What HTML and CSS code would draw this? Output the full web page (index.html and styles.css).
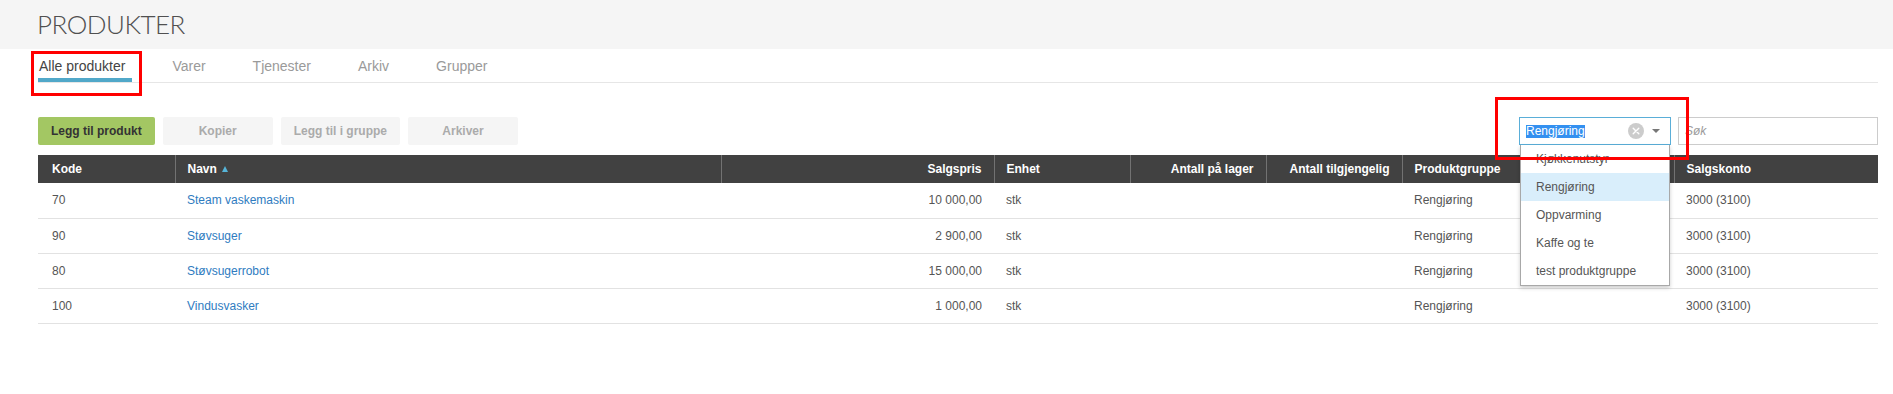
FILE: index.html
```html
<!DOCTYPE html>
<html lang="no">
<head>
<meta charset="utf-8">
<title>Produkter</title>
<link rel="stylesheet" href="styles.css">
</head>
<body>
<header class="page-head">
  <h1 class="page-title">PRODUKTER</h1>
</header>
<main class="content">
  <nav class="tabs">
    <a class="tab active">Alle produkter<span class="annot annot-tab"></span></a>
    <a class="tab">Varer</a>
    <a class="tab">Tjenester</a>
    <a class="tab">Arkiv</a>
    <a class="tab">Grupper</a>
  </nav>

  <div class="toolbar">
    <div class="actions">
      <button class="btn btn-primary">Legg til produkt</button>
      <button class="btn btn-disabled">Kopier</button>
      <button class="btn btn-disabled">Legg til i gruppe</button>
      <button class="btn btn-disabled">Arkiver</button>
    </div>
    <div class="filters">
      <div class="combo">
        <span class="combo-value"><span class="combo-sel">Rengjøring</span></span>
        <span class="combo-clear">
          <svg width="16" height="16" viewBox="0 0 16 16"><circle cx="8" cy="8" r="8" fill="#cccccc"/><path d="M5.2 5.2 L10.8 10.8 M10.8 5.2 L5.2 10.8" stroke="#ffffff" stroke-width="1.4" stroke-linecap="round"/></svg>
        </span>
        <span class="combo-caret"></span>
        <ul class="combo-menu">
          <li>Kjøkkenutstyr</li>
          <li class="hover">Rengjøring</li>
          <li>Oppvarming</li>
          <li>Kaffe og te</li>
          <li>test produktgruppe</li>
        </ul>
        <span class="annot annot-combo"></span>
      </div>
      <input class="search" type="text" placeholder="Søk">
    </div>
  </div>

  <table class="grid">
    <colgroup>
      <col class="c-kode"><col class="c-navn"><col class="c-pris"><col class="c-enhet">
      <col class="c-lager"><col class="c-tilg"><col class="c-gruppe"><col class="c-konto">
    </colgroup>
    <thead>
      <tr>
        <th class="first">Kode</th>
        <th>Navn <span class="sort-up"></span></th>
        <th class="num">Salgspris</th>
        <th>Enhet</th>
        <th class="num">Antall på lager</th>
        <th class="num">Antall tilgjengelig</th>
        <th>Produktgruppe</th>
        <th>Salgskonto</th>
      </tr>
    </thead>
    <tbody>
      <tr>
        <td class="first">70</td><td><a class="link">Steam vaskemaskin</a></td><td class="num">10 000,00</td><td>stk</td>
        <td class="num"></td><td class="num"></td><td>Rengjøring</td><td>3000 (3100)</td>
      </tr>
      <tr>
        <td class="first">90</td><td><a class="link">Støvsuger</a></td><td class="num">2 900,00</td><td>stk</td>
        <td class="num"></td><td class="num"></td><td>Rengjøring</td><td>3000 (3100)</td>
      </tr>
      <tr>
        <td class="first">80</td><td><a class="link">Støvsugerrobot</a></td><td class="num">15 000,00</td><td>stk</td>
        <td class="num"></td><td class="num"></td><td>Rengjøring</td><td>3000 (3100)</td>
      </tr>
      <tr>
        <td class="first">100</td><td><a class="link">Vindusvasker</a></td><td class="num">1 000,00</td><td>stk</td>
        <td class="num"></td><td class="num"></td><td>Rengjøring</td><td>3000 (3100)</td>
      </tr>
    </tbody>
  </table>
</main>
</body>
</html>
```

FILE: styles.css
```css
* { box-sizing: border-box; }

html, body {
  margin: 0;
  padding: 0;
  background: #ffffff;
  font-family: "Liberation Sans", Arial, sans-serif;
  font-size: 12px;
  color: #555555;
}

.page-head {
  height: 49px;
  background: #f5f5f5;
  padding-left: 37px;
}

.page-title {
  margin: 0;
  font-family: Lato, "Open Sans", sans-serif;
  font-weight: 300;
  font-size: 26px;
  line-height: 49px;
  color: #505050;
  letter-spacing: -0.5px;
}

.content {
  padding: 0 15px 0 38px;
}

/* Tabs */
.tabs {
  display: flex;
  gap: 39px;
  padding-top: 9px;
  border-bottom: 1px solid #e6e6e6;
}

.tab {
  position: relative;
  display: block;
  font-size: 14px;
  line-height: 16px;
  color: #9a9a9a;
  padding: 0 7px 4px 1px;
  border-bottom: 4px solid transparent;
}

.tab.active {
  color: #444444;
  border-bottom-color: #51a8c9;
}

.annot {
  position: absolute;
  border: 3px solid #ff0000;
  z-index: 20;
  pointer-events: none;
}

.annot-tab {
  left: -7px;
  top: -7px;
  width: 111px;
  height: 45px;
}

/* Toolbar */
.toolbar {
  display: flex;
  align-items: center;
  justify-content: space-between;
  margin-top: 34px;
  height: 28px;
}

.actions {
  display: flex;
  gap: 8px;
}

.btn {
  height: 28px;
  min-width: 110px;
  padding: 0 13px;
  border: 0;
  border-radius: 2px;
  font-family: "Liberation Sans", Arial, sans-serif;
  font-size: 12px;
  font-weight: bold;
}

.btn-primary {
  background: #a3c763;
  color: #333333;
}

.btn-disabled {
  background: #f5f5f5;
  color: #ababab;
}

.filters {
  display: flex;
  gap: 7px;
}

.combo {
  position: relative;
  display: flex;
  align-items: center;
  width: 152px;
  height: 28px;
  border: 1px solid #5aaed8;
  padding: 0 10px 0 6px;
  background: #ffffff;
}

.combo-value {
  flex: 1;
  line-height: 13px;
}

.combo-sel {
  background: #3390f0;
  color: #ffffff;
  font-size: 12px;
  line-height: 13px;
  display: inline-block;
}

.combo-clear {
  display: flex;
  width: 16px;
  height: 16px;
  margin-right: 8px;
}

.combo-caret {
  width: 0;
  height: 0;
  border-left: 4px solid transparent;
  border-right: 4px solid transparent;
  border-top: 4px solid #777777;
}

.combo-menu {
  position: absolute;
  left: 0;
  top: 27px;
  width: 150px;
  margin: 0;
  padding: 0;
  list-style: none;
  background: #ffffff;
  border: 1px solid #a8a8a8;
  border-top: 0;
  box-shadow: 0 2px 4px rgba(0, 0, 0, 0.2);
  z-index: 10;
}

.combo-menu li {
  height: 28px;
  line-height: 28px;
  padding-left: 15px;
  font-size: 12px;
  color: #555555;
}

.combo-menu li.hover {
  background: #d9eefb;
}

.annot-combo {
  left: -25px;
  top: -21px;
  width: 194px;
  height: 63px;
}

.search {
  width: 200px;
  height: 28px;
  border: 1px solid #cccccc;
  padding: 0 6px;
  font-family: "Liberation Sans", Arial, sans-serif;
  font-size: 12px;
  outline: none;
}

.search::placeholder {
  color: #9a9a9a;
  font-style: italic;
}

/* Table */
.grid {
  width: 100%;
  margin-top: 10px;
  border-collapse: collapse;
  table-layout: fixed;
}

.c-kode { width: 137px; }
.c-navn { width: 546px; }
.c-pris { width: 273px; }
.c-enhet { width: 136px; }
.c-lager { width: 136px; }
.c-tilg { width: 136px; }
.c-gruppe { width: 272px; }
.c-konto { width: 204px; }

.grid th {
  height: 28px;
  padding: 0 12px;
  background: #414141;
  color: #ffffff;
  font-size: 12px;
  font-weight: bold;
  text-align: left;
  border-left: 1px solid #727272;
  white-space: nowrap;
}

.grid th.first {
  border-left: 0;
  padding-left: 14px;
}

.grid td {
  height: 35px;
  padding: 0 12px;
  border-bottom: 1px solid #e2e2e2;
  font-size: 12px;
  color: #555555;
  white-space: nowrap;
}

.grid td.first {
  padding-left: 14px;
}

.grid .num {
  text-align: right;
}

.link {
  color: #2f7cbf;
  text-decoration: none;
}

.sort-up {
  display: inline-block;
  width: 0;
  height: 0;
  margin-left: 2px;
  vertical-align: 1px;
  border-left: 3px solid transparent;
  border-right: 3px solid transparent;
  border-bottom: 6px solid #56b4d8;
}
```
